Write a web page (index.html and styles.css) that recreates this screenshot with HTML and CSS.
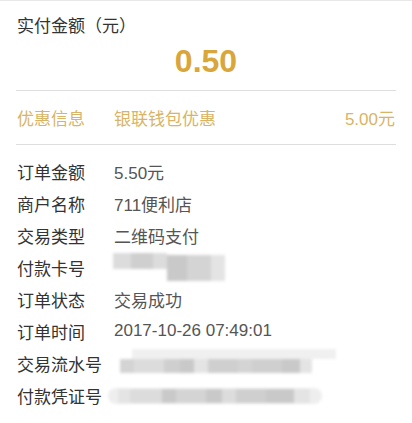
FILE: index.html
```html
<!DOCTYPE html>
<html lang="zh-CN">
<head>
<meta charset="utf-8">
<title>订单详情</title>
<link rel="stylesheet" href="styles.css">
</head>
<body>
<div class="page">
  <div class="title">实付金额（元）</div>
  <div class="amount">0.50</div>
  <div class="discount">
    <span class="label">优惠信息</span>
    <span class="disc-name">银联钱包优惠</span>
    <span class="disc-value">5.00元</span>
  </div>
  <div class="list">
    <div class="row"><span class="label">订单金额</span><span class="value">5.50元</span></div>
    <div class="row"><span class="label">商户名称</span><span class="value">711便利店</span></div>
    <div class="row"><span class="label">交易类型</span><span class="value">二维码支付</span></div>
    <div class="row"><span class="label">付款卡号</span>
      <span class="blur blur-card">
        <i class="b g2 w18"></i><i class="b g1 w22"></i><i class="b g2 w14"></i><i class="b g3 w20 tall"></i><i class="b g4 w24 tall"></i><i class="b g5 w14 tall"></i>
      </span>
    </div>
    <div class="row"><span class="label">订单状态</span><span class="value">交易成功</span></div>
    <div class="row"><span class="label">订单时间</span><span class="value">2017-10-26 07:49:01</span></div>
    <div class="row"><span class="label">交易流水号</span>
      <span class="blur blur-long">
        <i class="b g4 w14"></i><i class="b g2 w30"></i><i class="b g1 w16"></i><i class="b g3 w14"></i><i class="b g5 w14"></i><i class="b g1 w30"></i><i class="b g4 w14"></i><i class="b g1 w30"></i><i class="b g3 w18"></i><i class="b g5 w12"></i>
      </span>
    </div>
    <div class="row"><span class="label">付款凭证号</span>
      <span class="blur blur-long2">
        <i class="b g5 w12"></i><i class="b g2 w32"></i><i class="b g3 w14"></i><i class="b g4 w30"></i><i class="b g3 w16"></i><i class="b g2 w14"></i><i class="b g1 w30"></i><i class="b g3 w14"></i><i class="b g3 w14"></i><i class="b g5 w16"></i>
      </span>
    </div>
  </div>
</div>
</body>
</html>
```
FILE: styles.css
```css
html, body {
  margin: 0;
  padding: 0;
  background: #ffffff;
}
body {
  font-family: "Liberation Sans", "Noto Sans CJK SC", sans-serif;
  border-top: 1px solid #e8e8e8;
}
.page {
  padding: 0 16px;
}
.title {
  font-size: 17px;
  line-height: 24px;
  padding-top: 14px;
  color: #333333;
  padding-left: 1px;
}
.amount {
  margin-top: 2px;
  margin-bottom: 9px;
  font-size: 32px;
  line-height: 40px;
  font-weight: bold;
  text-align: center;
  color: #d9a63b;
}
.discount {
  display: flex;
  align-items: center;
  height: 53px;
  border-top: 1px solid #dedede;
  border-bottom: 1px solid #dedede;
  font-size: 17px;
  color: #d8b466;
}
.label {
  width: 98px;
  flex: none;
  padding-left: 1px;
  box-sizing: border-box;
}
.disc-name {
  flex: 1;
}
.disc-value {
  padding-right: 1px;
}
.list {
  padding-top: 10px;
}
.row {
  display: flex;
  align-items: center;
  height: 32px;
  font-size: 17px;
  color: #333333;
}
.row .label {
  color: #333333;
}
.value {
  color: #555555;
}
.blur {
  display: flex;
  align-items: flex-start;
  filter: blur(1.8px);
}
.b {
  display: block;
  height: 14px;
}
.blur-card {
  margin-top: 0;
  margin-left: -1px;
  height: 28px;
}
.blur-card .b {
  height: 16px;
}
.blur-card .tall {
  height: 26px;
  margin-top: 2px;
}
.blur-long {
  margin-top: 6px;
  margin-left: 4px;
  padding: 0 14px 0 2px;
  box-shadow: 12px -12px 0 -2px #f0f0f0;
}
.blur-long2 {
  margin-top: 2px;
  margin-left: -6px;
  padding: 1px 12px 1px 10px;
  background: #eeeeee;
  border-radius: 9px;
}
.g1 { background: #cfcfcf; }
.g2 { background: #dcdcdc; }
.g3 { background: #c9c9c9; }
.g4 { background: #d4d4d4; }
.g5 { background: #e4e4e4; }
.w10 { width: 10px; }
.w12 { width: 12px; }
.w14 { width: 14px; }
.w16 { width: 16px; }
.w18 { width: 18px; }
.w20 { width: 20px; }
.w22 { width: 22px; }
.w24 { width: 24px; }
.w30 { width: 30px; }
.w32 { width: 32px; }
```
